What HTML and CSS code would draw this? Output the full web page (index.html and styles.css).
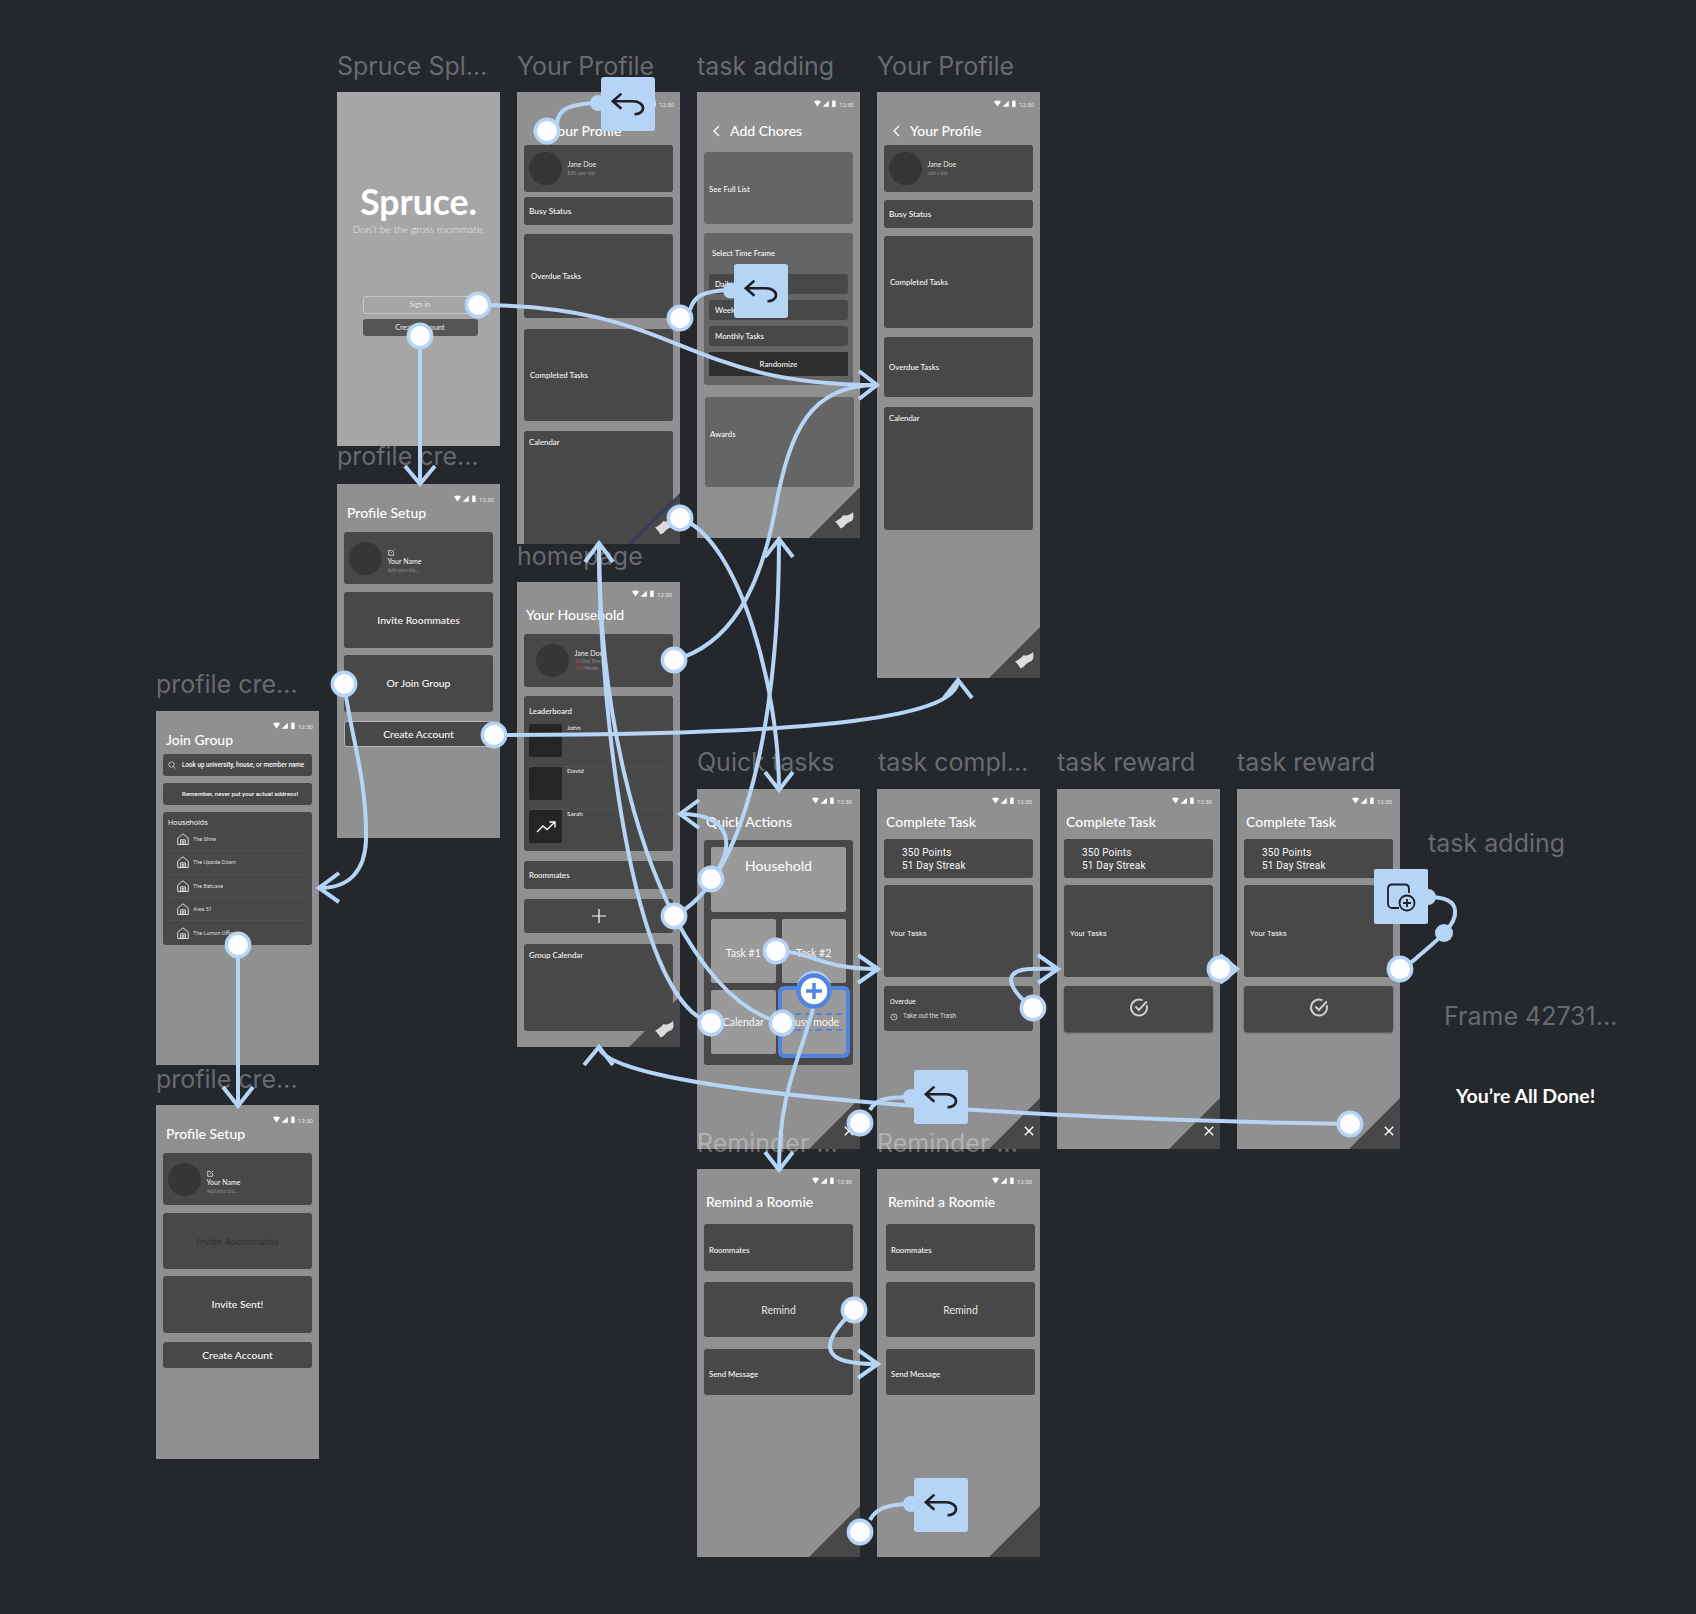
FILE: index.html
```html
<!DOCTYPE html>
<html lang="en">
<head>
  <meta charset="UTF-8" />
  <title>Spruce prototype</title>
  <link rel="stylesheet" href="styles.css">
</head>
<body>
  <svg class="defs" width="0" height="0">
    <symbol id="sb" viewBox="0 0 22 8">
      <path d="M0 1.6Q3.5-.6 7 1.6L3.5 6.4Z" fill="#fff"/>
      <path d="M8.6 6.8H14.8V.8Z" fill="#fff"/>
      <rect x="18.2" y=".6" width="3.4" height="6.4" fill="#fff"/>
    </symbol>
    <symbol id="eraser" viewBox="0 0 20 18">
      <path d="M1 10.5C4 9.5 7 7 9.5 4C12.5 5.500 16 4 19 1C20 5 19.5 8.500 17.5 10C14.5 11 11.5 13 9.5 16L6.5 17.500C5 14.5 3 12.5 1 10.5Z" fill="#dcdcdc"/>
    </symbol>
    <symbol id="x" viewBox="0 0 10 10">
      <path d="M.8.8 9.2 9.2M9.2.8.8 9.2" stroke="#fff" stroke-width="1.3" fill="none"/>
    </symbol>
    <symbol id="house" viewBox="0 0 12 12">
      <path d="M.7 5.2 6 .8 11.3 5.2V11.5H.7ZM3.6 11.5V6.8H8.4V11.5M5.2 11.5V8.3H6.8V11.5" stroke="#fff" stroke-width=".8" fill="none"/>
    </symbol>
    <symbol id="edit" viewBox="0 0 7 7">
      <path d="M5.6 3.5V6.3H.7V1.4H3.5M2.7 4.2 6.3.7" stroke="#fff" stroke-width=".7" fill="none"/>
    </symbol>
    <symbol id="check" viewBox="0 0 20 20">
      <path d="M17.7 8.300A8 8 0 1 1 13.5 3.3M6.3 9.3 9.8 13 17.8 4.5" stroke="#cfcfcf" stroke-width="1.9" fill="none"/>
    </symbol>
    <symbol id="undo" viewBox="0 0 54 54">
      <path d="M20.4 16.6 11.8 24.3 20.4 31.8M12.5 24.3H32C38 24.3 42 27.5 42 31C42 35 38 37.3 33.5 37.3" stroke="#1d2127" stroke-width="2.6" fill="none"/>
    </symbol>
  </svg>

  <main class="canvas">

    <section class="frame f-splash">
      <div class="logo">Spruce.</div>
      <div class="tagline">Don’t be the gross roommate.</div>
      <div class="btn-signin">Sign in</div>
      <div class="btn-create">Create Account</div>
    </section>

    <section class="frame f-profile1">
      <div class="status"><svg class="sb"><use href="#sb"/></svg><span>12:30</span></div>
      <div class="title with-back"><svg class="back" viewBox="0 0 7 12"><path d="M6 1 1 6 6 11" stroke="#fff" stroke-width="1.3" fill="none"/></svg>Your Profile</div>
      <div class="card bio"><div class="avatar"></div><div><div class="bio-name">Jane Doe</div><div class="bio-sub">Edit your bio</div></div></div>
      <div class="card label-card busy p1-busy">Busy Status</div>
      <div class="card label-card p1-overdue">Overdue Tasks</div>
      <div class="card label-card p1-completed">Completed Tasks</div>
      <div class="card label-top p1-calendar">Calendar</div>
      <div class="corner glow"><svg class="eraser"><use href="#eraser"/></svg></div>
    </section>

    <section class="frame f-chores">
      <div class="status"><svg class="sb"><use href="#sb"/></svg><span>12:30</span></div>
      <div class="title with-back"><svg class="back" viewBox="0 0 7 12"><path d="M6 1 1 6 6 11" stroke="#fff" stroke-width="1.3" fill="none"/></svg>Add Chores</div>
      <div class="card light label-card ch-list">See Full List</div>
      <div class="card light ch-time">
        <div class="ch-time-title">Select Time Frame</div>
        <div class="ch-row">Daily Tasks</div>
        <div class="ch-row">Weekly Tasks</div>
        <div class="ch-row">Monthly Tasks</div>
        <div class="ch-random">Randomize</div>
      </div>
      <div class="card light label-card ch-awards">Awards</div>
      <div class="corner"><svg class="eraser"><use href="#eraser"/></svg></div>
    </section>

    <section class="frame f-profile2">
      <div class="status"><svg class="sb"><use href="#sb"/></svg><span>12:30</span></div>
      <div class="title with-back"><svg class="back" viewBox="0 0 7 12"><path d="M6 1 1 6 6 11" stroke="#fff" stroke-width="1.3" fill="none"/></svg>Your Profile</div>
      <div class="card bio"><div class="avatar"></div><div><div class="bio-name">Jane Doe</div><div class="bio-sub">add a bio</div></div></div>
      <div class="card label-card busy p2-busy">Busy Status</div>
      <div class="card label-card p2-completed">Completed Tasks</div>
      <div class="card label-card p2-overdue">Overdue Tasks</div>
      <div class="card label-top p2-calendar">Calendar</div>
      <div class="corner"><svg class="eraser"><use href="#eraser"/></svg></div>
    </section>

    <section class="frame f-setup1 head-c">
      <div class="status"><svg class="sb"><use href="#sb"/></svg><span>12:30</span></div>
      <div class="title">Profile Setup</div>
      <div class="card bio s-bio"><div class="avatar"></div><div class="s-text"><svg class="edit"><use href="#edit"/></svg><div class="s-name">Your Name</div><div class="bio-sub">Add your bio...</div></div></div>
      <div class="card big-center s-invite">Invite Roommates</div>
      <div class="card big-center s-join">Or Join Group</div>
      <div class="card big-center s-create outlined">Create Account</div>
    </section>

    <section class="frame f-home head-b">
      <div class="status inset"><svg class="sb"><use href="#sb"/></svg><span>12:30</span></div>
      <div class="title">Your Household</div>
      <div class="card bio h-bio">
        <div class="avatar"></div>
        <div>
          <div class="bio-name">Jane Doe</div>
          <div class="h-stat"><b>30</b> Day Streak</div>
          <div class="h-stat"><b>100</b> Points</div>
        </div>
      </div>
      <div class="card h-board">
        <div class="h-board-title">Leaderboard</div>
        <div class="h-row"><div class="thumb"></div><div class="h-name">John</div></div>
        <div class="h-row"><div class="thumb"></div><div class="h-name">David</div></div>
        <div class="h-row"><div class="thumb"><svg class="trend" viewBox="0 0 20 12"><path d="M1 11 7 5 11 8.5 18.5 1.5M13.5 1H19V6.5" stroke="#fff" stroke-width="1.3" fill="none"/></svg></div><div class="h-name">Sarah</div></div>
      </div>
      <div class="card label-card h-mates">Roommates</div>
      <div class="card h-add"><svg class="plus" viewBox="0 0 14 14"><path d="M7 0V14M0 7H14" stroke="#fff" stroke-width="1.2"/></svg></div>
      <div class="card label-top h-cal">Group Calendar</div>
      <div class="corner"><svg class="eraser"><use href="#eraser"/></svg></div>
    </section>

    <section class="frame f-quick head-b">
      <div class="status inset"><svg class="sb"><use href="#sb"/></svg><span>12:30</span></div>
      <div class="title">Quick Actions</div>
      <div class="card q-panel">
        <div class="tile q-household">Household</div>
        <div class="tile q-task">Task #1</div>
        <div class="tile q-task">Task #2</div>
        <div class="tile">Calendar</div>
        <div class="tile q-busy"><span>Busy mode</span></div>
      </div>
      <div class="corner"><svg class="close"><use href="#x"/></svg></div>
    </section>

    <section class="frame f-complete head-b">
      <div class="status inset"><svg class="sb"><use href="#sb"/></svg><span>12:30</span></div>
      <div class="title">Complete Task</div>
      <div class="card t-points">350 Points<br>51 Day Streak</div>
      <div class="card label-card t-tasks">Your Tasks</div>
      <div class="card t-overdue">
        <div>Overdue</div>
        <div class="t-trash"><svg class="clock" viewBox="0 0 8 8"><circle cx="4" cy="4" r="3" stroke="#eee" stroke-width=".7" fill="none"/><path d="M4 2.2V4.2H5.4" stroke="#eee" stroke-width=".6" fill="none"/></svg>Take out the Trash</div>
      </div>
      <div class="corner"><svg class="close"><use href="#x"/></svg></div>
    </section>

    <section class="frame f-reward1 head-b">
      <div class="status inset"><svg class="sb"><use href="#sb"/></svg><span>12:30</span></div>
      <div class="title">Complete Task</div>
      <div class="card t-points">350 Points<br>51 Day Streak</div>
      <div class="card label-card t-tasks">Your Tasks</div>
      <div class="card t-done"><svg class="check"><use href="#check"/></svg></div>
      <div class="corner"><svg class="close"><use href="#x"/></svg></div>
    </section>

    <section class="frame f-reward2 head-b">
      <div class="status inset"><svg class="sb"><use href="#sb"/></svg><span>12:30</span></div>
      <div class="title">Complete Task</div>
      <div class="card t-points">350 Points<br>51 Day Streak</div>
      <div class="card label-card t-tasks">Your Tasks</div>
      <div class="card t-done"><svg class="check"><use href="#check"/></svg></div>
      <div class="corner"><svg class="close"><use href="#x"/></svg></div>
    </section>

    <section class="frame f-join head-c">
      <div class="status"><svg class="sb"><use href="#sb"/></svg><span>12:30</span></div>
      <div class="title">Join Group</div>
      <div class="card j-bar j-search"><svg class="search" viewBox="0 0 8 8"><circle cx="3.5" cy="3.5" r="2.7" stroke="#eee" stroke-width=".7" fill="none"/><path d="M5.5 5.5 7.5 7.5" stroke="#eee" stroke-width=".7"/></svg>Look up university, house, or member name</div>
      <div class="card j-bar j-note">Remember, never put your actual address!</div>
      <div class="card j-list">
        <div class="j-title">Households</div>
        <div class="j-row"><svg class="house"><use href="#house"/></svg>The Shire</div>
        <div class="j-row"><svg class="house"><use href="#house"/></svg>The Upside Down</div>
        <div class="j-row"><svg class="house"><use href="#house"/></svg>The Batcave</div>
        <div class="j-row"><svg class="house"><use href="#house"/></svg>Area 51</div>
        <div class="j-row"><svg class="house"><use href="#house"/></svg>The Lumon Office</div>
      </div>
    </section>

    <section class="frame f-setup2 head-c">
      <div class="status"><svg class="sb"><use href="#sb"/></svg><span>12:30</span></div>
      <div class="title">Profile Setup</div>
      <div class="card bio s-bio"><div class="avatar"></div><div class="s-text"><svg class="edit"><use href="#edit"/></svg><div class="s-name">Your Name</div><div class="bio-sub">Add your bio...</div></div></div>
      <div class="card big-center s-invite muted">Invite Roommates</div>
      <div class="card big-center s-join">Invite Sent!</div>
      <div class="card big-center s-create">Create Account</div>
    </section>

    <section class="frame f-remind1 head-b">
      <div class="status inset"><svg class="sb"><use href="#sb"/></svg><span>12:30</span></div>
      <div class="title">Remind a Roomie</div>
      <div class="card label-card r-mates">Roommates</div>
      <div class="card r-remind">Remind</div>
      <div class="card label-card r-send">Send Message</div>
      <div class="corner"></div>
    </section>

    <section class="frame f-remind2 head-b">
      <div class="status inset"><svg class="sb"><use href="#sb"/></svg><span>12:30</span></div>
      <div class="title">Remind a Roomie</div>
      <div class="card label-card r-mates">Roommates</div>
      <div class="card r-remind">Remind</div>
      <div class="card label-card r-send">Send Message</div>
      <div class="corner"></div>
    </section>

    <div class="label l-splash">Spruce Spl…</div>
    <div class="label l-profile1">Your Profile</div>
    <div class="label l-chores">task adding</div>
    <div class="label l-profile2">Your Profile</div>
    <div class="label l-setup1">profile cre…</div>
    <div class="label l-home">homepage</div>
    <div class="label l-join">profile cre…</div>
    <div class="label l-setup2">profile cre…</div>
    <div class="label l-quick">Quick tasks</div>
    <div class="label l-complete">task compl…</div>
    <div class="label l-reward1">task reward</div>
    <div class="label l-reward2">task reward</div>
    <div class="label l-adding">task adding</div>
    <div class="label l-frame">Frame 42731…</div>
    <div class="label l-remind1">Reminder …</div>
    <div class="label l-remind2">Reminder …</div>

    <div class="all-done">You’re All Done!</div>

    <!-- prototype connectors -->
    <svg class="wires" viewBox="0 0 1696 1614">
      <g class="line">
        <path d="M478 305C680 305 680 385 877 385"/>
        <path d="M674 660C730 645 760 590 775 510C790 430 810 385 877 385"/>
        <path d="M420 336V484"/>
        <path d="M557 124C558 108 570 104 598 103"/>
        <path d="M690 310C694 296 702 291 731 290"/>
        <path d="M680 518C740 540 779 690 779 790"/>
        <path d="M494 735C800 735 958 720 958 680"/>
        <path d="M344 684C352 740 367 780 366 840C365 870 350 888 320 888"/>
        <path d="M238 945V1106"/>
        <path d="M711 1023C630 1000 599 700 599 543"/>
        <path d="M782 1023C730 1010 695 955 674 916C640 850 599 720 599 543"/>
        <path d="M674 916C745 880 779 720 779 539"/>
        <path d="M711 879C735 850 735 814 680 814"/>
        <path d="M776 951C810 951 820 969 878 969"/>
        <path d="M814 1005C800 1060 779 1090 779 1170"/>
        <path d="M1033 1008C1015 995 1000 975 1022 970C1030 968 1045 969 1058 969"/>
        <path d="M870 1110C875 1100 885 1097 911 1097"/>
        <path d="M1220 969H1237"/>
        <path d="M1400 969L1413 961C1425 950 1435 943 1444 933C1452 925 1456 917 1455 910C1454 901 1445 897 1428 897"/>
        <path d="M1350 1124C1050 1120 610 1095 599 1047"/>
        <path d="M854 1310C842 1322 830 1335 830 1346C830 1362 855 1364 878 1364"/>
        <path d="M870 1520C875 1510 885 1504 911 1504"/>
        <!-- arrow heads -->
        <path d="M859 371 877 385 859 399"/>
        <path d="M405 466 420 484 435 466"/>
        <path d="M585 562 599 543 613 562"/>
        <path d="M765 772 779 790 793 772"/>
        <path d="M765 557 779 539 793 557"/>
        <path d="M944 698 958 680 972 698"/>
        <path d="M339 873 319 888 339 902"/>
        <path d="M223 1087 238 1106 253 1087"/>
        <path d="M699 800 680 814 699 828"/>
        <path d="M858 955 878 969 858 983"/>
        <path d="M1038 955 1058 969 1038 983"/>
        <path d="M1220 955 1237 969 1220 983"/>
        <path d="M765 1152 779 1170 793 1152"/>
        <path d="M858 1350 878 1364 858 1378"/>
        <path d="M584 1065 599 1047 613 1065"/>
      </g>

      <g class="sticker">
        <circle cx="598" cy="103" r="8"/>
        <rect x="601" y="77" width="54" height="54" rx="3"/>
        <circle cx="731" cy="290.5" r="8"/>
        <rect x="734" y="264" width="54" height="54" rx="3"/>
        <circle cx="911" cy="1097" r="8"/>
        <rect x="914" y="1070" width="54" height="54" rx="3"/>
        <circle cx="911" cy="1504" r="8"/>
        <rect x="914" y="1478" width="54" height="54" rx="3"/>
        <circle cx="1428" cy="897" r="8"/>
        <rect x="1374" y="869" width="54" height="55" rx="2"/>
        <circle cx="1444" cy="933" r="9"/>
        <circle cx="814" cy="988" r="17"/>
      </g>
      <use href="#undo" x="601" y="77" width="54" height="54"/>
      <use href="#undo" x="734" y="264" width="54" height="54"/>
      <use href="#undo" x="914" y="1070" width="54" height="54"/>
      <use href="#undo" x="914" y="1478" width="54" height="54"/>
      <g class="add-icon">
        <path d="M1409 893V889C1409 886 1407 884.5 1405 884.5H1392C1390 884.5 1388 886 1388 889V904C1388 906.5 1390 908 1392 908H1399"/>
        <circle cx="1407" cy="903" r="7.5"/>
        <path d="M1407 899V907M1403 903H1411"/>
      </g>

      <g class="dots">
        <circle cx="478" cy="305" r="11.7"/>
        <circle cx="420" cy="336" r="11.7"/>
        <circle cx="547" cy="131" r="11.7"/>
        <circle cx="680" cy="318" r="11.7"/>
        <circle cx="680" cy="518" r="11.7"/>
        <circle cx="674" cy="660" r="11.7"/>
        <circle cx="494" cy="735" r="11.7"/>
        <circle cx="344" cy="684" r="11.7"/>
        <circle cx="238" cy="945" r="11.7"/>
        <circle cx="711" cy="1023" r="11.7"/>
        <circle cx="674" cy="916" r="11.7"/>
        <circle cx="711" cy="879" r="11.7"/>
        <circle cx="782" cy="1023" r="11.7"/>
        <circle cx="776" cy="951" r="11.7"/>
        <circle cx="1033" cy="1008" r="11.7"/>
        <circle cx="860" cy="1123" r="11.7"/>
        <circle cx="1220" cy="969" r="11.7"/>
        <circle cx="1400" cy="969" r="11.7"/>
        <circle cx="1350" cy="1124" r="11.7"/>
        <circle cx="854" cy="1310" r="11.7"/>
        <circle cx="860" cy="1532" r="11.7"/>
      </g>
      <g class="handle">
        <circle cx="814" cy="991" r="15.5"/>
        <path d="M814 983V999M806 991H822"/>
      </g>
    </svg>
  </main>
</body>
</html>
```

FILE: styles.css
```css
* {
  box-sizing: border-box;
}
body {
  margin: 0;
  background: #24272c;
  font-family: "Lato", "Liberation Sans", sans-serif;
}
.defs {
  position: absolute;
}
.canvas {
  position: relative;
  width: 1696px;
  height: 1614px;
  overflow: hidden;
}

/* frames sit on a free canvas */
.frame {
  position: absolute;
  width: 163px;
  padding: 0 7px;
  display: flex;
  flex-direction: column;
  background: #909090;
  color: #f8f8f8;
  overflow: hidden;
}
.f-splash { left: 337px; top: 92px; height: 354px; background: #a6a6a6; padding: 0; align-items: center; }
.f-profile1 { left: 517px; top: 92px; height: 452px; }
.f-chores { left: 697px; top: 92px; height: 446px; }
.f-profile2 { left: 877px; top: 92px; height: 586px; }
.f-setup1 { left: 337px; top: 484px; height: 354px; }
.f-home { left: 517px; top: 582px; height: 465px; }
.f-quick { left: 697px; top: 789px; height: 360px; }
.f-complete { left: 877px; top: 789px; height: 360px; }
.f-reward1 { left: 1057px; top: 789px; height: 360px; }
.f-reward2 { left: 1237px; top: 789px; height: 360px; }
.f-join { left: 156px; top: 711px; height: 354px; }
.f-setup2 { left: 156px; top: 1105px; height: 354px; }
.f-remind1 { left: 697px; top: 1169px; height: 388px; }
.f-remind2 { left: 877px; top: 1169px; height: 388px; padding-left: 9px; padding-right: 5px; }

/* status bar + title */
.status {
  flex: none;
  height: 12px;
  margin: 6px -1px 0 0;
  display: flex;
  align-items: center;
  justify-content: flex-end;
  gap: 3px;
  font: 6px "Roboto", sans-serif;
  color: #e6e6e6;
}
.status.inset {
  margin-right: 1px;
}
.f-remind2 .status.inset {
  margin-right: 3px;
}
.sb {
  width: 22px;
  height: 8px;
}
.title {
  flex: none;
  height: 20px;
  margin-top: 11px;
  font-size: 14px;
  font-weight: 500;
  line-height: 20px;
  color: #fff;
  white-space: nowrap;
  padding-left: 2px;
}
.title.with-back {
  display: flex;
  align-items: center;
  gap: 10px;
  padding-left: 9px;
}
.back {
  width: 7px;
  height: 12px;
}
.head-b .title {
  margin: 5px 0 1px;
}
.head-c .status {
  margin-top: 9px;
}
.head-c .title {
  margin: -2px 0 1px;
  padding-left: 3px;
}

/* cards */
.card {
  flex: none;
  background: #484848;
  border-radius: 3px;
  font-size: 7.8px;
  font-weight: 500;
  white-space: nowrap;
}
.card.light {
  background: #656565;
}
.label-card {
  display: flex;
  align-items: center;
  padding-left: 5px;
}
.label-card.busy {
  font-size: 8.3px;
}
.label-top {
  padding: 6px 5px;
}
.big-center {
  display: flex;
  align-items: center;
  justify-content: center;
  font-size: 10.4px;
  font-weight: 500;
}
.outlined {
  border: 1px solid #b5b5b5;
}
.muted {
  color: #333;
}
.bio {
  height: 47px;
  margin-top: 4px;
  display: flex;
  align-items: center;
  gap: 5.5px;
  padding-left: 5px;
}
.avatar {
  width: 33px;
  height: 33px;
  border-radius: 50%;
  background: #363636;
}
.bio-name {
  font-size: 7px;
  font-weight: 400;
  line-height: 9px;
  color: #eee;
}
.bio-sub {
  font-size: 5px;
  font-weight: 400;
  line-height: 8px;
  color: #8c8c8c;
}

/* corner fold */
.corner {
  position: absolute;
  right: 0;
  bottom: 0;
  width: 51px;
  height: 51px;
  background: #484848;
  clip-path: polygon(100% 0, 100% 100%, 0 100%);
}
.corner.glow {
  background: linear-gradient(135deg, #2e2e78 50%, #484848 54%);
}
.eraser {
  position: absolute;
  right: 6px;
  bottom: 9px;
  width: 20px;
  height: 18px;
}
.close {
  position: absolute;
  right: 6px;
  bottom: 13px;
  width: 10px;
  height: 10px;
}

/* splash */
.logo {
  margin-top: 90px;
  font-size: 35.5px;
  font-weight: 700;
  line-height: 40px;
  color: #fff;
}
.tagline {
  margin-top: 1px;
  font-size: 10.3px;
  font-weight: 300;
  line-height: 12px;
  color: #e6e6e6;
}
.btn-signin,
.btn-create {
  width: 115px;
  margin-left: 3px;
  font-size: 7.3px;
  text-align: center;
  border-radius: 3px;
}
.btn-signin {
  height: 18px;
  margin-top: 61px;
  line-height: 16px;
  border: 1px solid #c8c8c8;
  color: #e0e0e0;
}
.btn-create {
  height: 17px;
  margin-top: 5px;
  line-height: 17px;
  background: #555;
  color: #eee;
}

/* your profile 1 */
.f-profile1 .p1-busy { height: 28px; margin-top: 5px; }
.f-profile1 .p1-overdue { height: 84px; margin-top: 9px; padding-left: 7px; }
.f-profile1 .p1-completed { height: 92px; margin-top: 11px; padding-left: 6px; }
.f-profile1 .p1-calendar { height: 130px; margin-top: 10px; }

/* add chores */
.ch-list { height: 72px; margin-top: 11px; padding-top: 2px; }
.ch-time { height: 152px; margin-top: 9px; padding: 14px 5px 0; }
.ch-time-title { padding-left: 3px; line-height: 12px; }
.ch-row {
  height: 20px;
  margin-top: 6px;
  padding-left: 6px;
  background: #484848;
  border-radius: 3px;
  line-height: 20px;
}
.ch-time-title + .ch-row { margin-top: 15px; }
.ch-random {
  height: 24px;
  margin-top: 6px;
  background: #2e2e2e;
  line-height: 24px;
  text-align: center;
}
.ch-awards {
  height: 90px;
  margin: 12px -1px 0 1px;
  padding-bottom: 16px;
  background: linear-gradient(#5c5c5c, #5c5c5c) no-repeat 5px 60px / 139px 1px, #656565;
}

/* your profile 2 */
.f-profile2 .p2-busy { height: 28px; margin-top: 8px; }
.f-profile2 .p2-completed { height: 92px; margin-top: 8px; padding-left: 6px; }
.f-profile2 .p2-overdue { height: 60px; margin-top: 9px; }
.f-profile2 .p2-calendar { height: 123px; margin-top: 10px; }

/* profile setup */
.s-bio { height: 52px; margin-top: 8px; }
.s-text { padding-top: 6px; }
.edit { display: block; width: 7px; height: 7px; }
.s-name { font-size: 7px; font-weight: 400; line-height: 10px; }
.s-invite { height: 56.5px; margin-top: 7.5px; }
.s-join { height: 57px; margin-top: 6.5px; }
.s-create { height: 26px; margin-top: 9.5px; }

/* household */
.h-bio { height: 53px; margin-top: 8px; padding-left: 12px; }
.h-stat { font-size: 5px; font-weight: 400; line-height: 7.5px; color: #8c8c8c; }
.h-stat b { font-weight: 400; color: #b04a4a; }
.h-board { height: 155px; margin-top: 9px; padding: 9px 5px 0; }
.h-board-title { line-height: 12px; margin-bottom: 7px; }
.h-row {
  display: flex;
  gap: 5px;
  height: 43px;
  padding-bottom: 10px;
  border-bottom: 1px solid #505050;
}
.h-row:last-child { border-bottom: 0; }
.thumb {
  width: 33px;
  height: 33px;
  display: flex;
  align-items: center;
  justify-content: center;
  background: #252525;
  border-radius: 2px;
}
.h-name { font-size: 6.5px; font-weight: 400; line-height: 8px; }
.trend { width: 20px; height: 12px; }
.h-mates { height: 28px; margin-top: 10px; }
.h-add {
  height: 34px;
  margin-top: 10px;
  display: flex;
  align-items: center;
  justify-content: center;
}
.plus { width: 14px; height: 14px; }
.h-cal { height: 87px; margin-top: 11px; }

/* quick actions */
.q-panel {
  height: 225px;
  margin-top: 7px;
  padding: 7px;
  display: grid;
  grid-template-columns: 1fr 1fr;
  grid-template-rows: 65px 64px 64px;
  gap: 7px 6px;
}
.tile {
  display: flex;
  align-items: center;
  justify-content: center;
  background: #9a9a9a;
  border-radius: 2px;
  font-size: 10.5px;
  font-weight: 400;
}
.q-household {
  grid-column: span 2;
  align-items: flex-start;
  padding-top: 10px;
  font-size: 14px;
  font-weight: 500;
}
.q-task {
  padding-top: 4px;
}
.q-busy {
  outline: 4px solid #5184e0;
}
.q-busy span {
  padding: 1px 3px;
  border-top: 2px dashed #5184e0;
  border-bottom: 2px dashed #5184e0;
}

/* complete task */
.t-points {
  height: 39px;
  margin-top: 6px;
  padding: 6.5px 0 0 18px;
  font: 10px/13px "Roboto", sans-serif;
  letter-spacing: .2px;
}
.t-tasks {
  height: 92px;
  margin-top: 7px;
  padding: 4px 0 0 6px;
  font: 7.5px "Roboto", sans-serif;
}
.t-overdue {
  height: 45px;
  margin-top: 9px;
  padding: 12px 0 0 6px;
  font: 7px/9px "Roboto", sans-serif;
}
.t-trash {
  display: flex;
  align-items: center;
  gap: 5px;
  margin-top: 5px;
  font-size: 6.5px;
  color: #ddd;
}
.clock { width: 8px; height: 8px; }
.t-done {
  height: 46px;
  margin-top: 9px;
  padding-bottom: 4px;
  display: flex;
  align-items: center;
  justify-content: center;
  box-shadow: 0 1px 2px rgba(0, 0, 0, .45);
}
.check { width: 20px; height: 20px; }

/* join group */
.j-bar {
  height: 22px;
  display: flex;
  align-items: center;
  font: 500 6.3px "Roboto", sans-serif;
}
.j-search { margin-top: 3px; padding-left: 5px; gap: 6px; }
.j-note { margin-top: 7px; padding-left: 19px; font-size: 6.2px; }
.search { width: 8px; height: 8px; }
.j-list {
  height: 133px;
  margin-top: 7px;
  padding: 5px 5px 0;
  overflow: hidden;
  font-family: "Roboto", sans-serif;
  font-weight: 400;
}
.j-title { font-size: 7.5px; line-height: 11px; color: #eee; }
.j-row {
  height: 23.3px;
  padding-left: 9px;
  display: flex;
  align-items: center;
  gap: 4px;
  font-size: 5.5px;
  color: #ddd;
  border-bottom: 1px solid #505050;
}
.j-row:last-child { border-bottom: 0; }
.house { width: 12px; height: 12px; }

/* reminders */
.r-mates { height: 47px; margin-top: 11px; padding-top: 5px; }
.r-remind {
  height: 55px;
  margin-top: 11px;
  display: flex;
  align-items: center;
  justify-content: center;
  font-size: 10.5px;
  font-weight: 400;
  color: #e2e2e2;
}
.r-send { height: 46px; margin-top: 12px; padding-top: 4px; }

/* canvas labels */
.label {
  position: absolute;
  font: 25px/32px "Inter", sans-serif;
  color: rgba(255, 255, 255, .33);
  white-space: nowrap;
}
.l-splash { left: 337px; top: 50px; }
.l-profile1 { left: 517px; top: 50px; }
.l-chores { left: 697px; top: 50px; }
.l-profile2 { left: 877px; top: 50px; }
.l-setup1 { left: 337px; top: 440px; }
.l-home { left: 517px; top: 540px; }
.l-join { left: 156px; top: 668px; }
.l-setup2 { left: 156px; top: 1063px; }
.l-quick { left: 697px; top: 746px; }
.l-complete { left: 878px; top: 746px; }
.l-reward1 { left: 1057px; top: 746px; }
.l-reward2 { left: 1237px; top: 746px; }
.l-adding { left: 1428px; top: 827px; }
.l-frame { left: 1444px; top: 1000px; }
.l-remind1 { left: 697px; top: 1127px; }
.l-remind2 { left: 877px; top: 1127px; }

.all-done {
  position: absolute;
  left: 1456px;
  top: 1084px;
  font-size: 19.5px;
  font-weight: 700;
  line-height: 24px;
  color: #fff;
  white-space: nowrap;
}

/* connectors */
.wires {
  position: absolute;
  left: 0;
  top: 0;
  width: 1696px;
  height: 1614px;
  pointer-events: none;
}
.line path {
  fill: none;
  stroke: #b6d4f6;
  stroke-width: 4;
}
.sticker {
  fill: #b6d4f6;
}
.dots circle {
  fill: #fdfdff;
  stroke: #b6d4f6;
  stroke-width: 3.4;
}
.handle circle {
  fill: #fff;
  stroke: #5184e0;
  stroke-width: 4.5;
}
.handle path {
  fill: none;
  stroke: #5184e0;
  stroke-width: 3.5;
}
.add-icon * {
  fill: none;
  stroke: #1d2127;
  stroke-width: 1.8;
}
.add-icon circle {
  fill: #b6d4f6;
}
```
